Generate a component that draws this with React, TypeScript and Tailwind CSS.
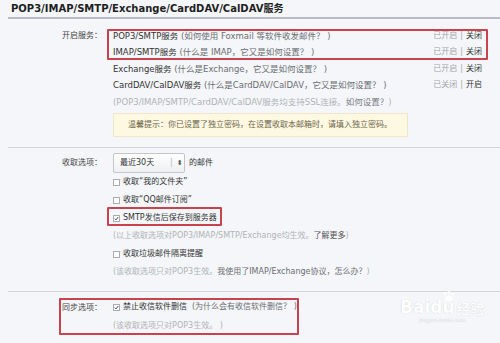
import React from "react";

const font = "font-['DejaVu_Sans','Noto_Sans_CJK_SC',sans-serif]";

function RedBox({ className }: { className: string }) {
  return (
    <div
      className={`pointer-events-none absolute rounded-[1px] border-2 border-[#c8434b] ${className}`}
    />
  );
}

function Checkbox({ checked }: { checked?: boolean }) {
  return (
    <span className="mr-[3px] inline-flex h-[7px] w-[7px] shrink-0 items-center justify-center border border-[#a9adb2] bg-white">
      {checked && (
        <svg viewBox="0 0 8 8" className="h-[7px] w-[7px]">
          <path d="M1.2 4.2 L3.2 6.2 L6.8 1.6" fill="none" stroke="#333" strokeWidth="1.4" />
        </svg>
      )}
    </span>
  );
}

type Service = {
  name: string;
  desc: string;
  on: boolean;
};

const services: Service[] = [
  { name: "POP3/SMTP服务", desc: "(如何使用 Foxmail 等软件收发邮件？ )", on: true },
  { name: "IMAP/SMTP服务", desc: "(什么是 IMAP，它又是如何设置？ )", on: true },
  { name: "Exchange服务", desc: "(什么是Exchange，它又是如何设置？ )", on: true },
  { name: "CardDAV/CalDAV服务", desc: "(什么是CardDAV/CalDAV，它又是如何设置？ )", on: false },
];

export default function App() {
  return (
    <div className={`relative h-[343px] w-[500px] overflow-hidden bg-[#f4f6f9] text-[8px] text-[#333] ${font}`}>
      {/* title */}
      <div className="ml-[8px] h-[19px] border-b-2 border-[#b9bdc3] pl-[3px] text-[10px] font-bold leading-[17px] text-[#1f1f1f]">
        POP3/IMAP/SMTP/Exchange/CardDAV/CalDAV服务
      </div>

      {/* services */}
      <div className="relative mt-[8.5px] flex">
        <div className="w-[102px] shrink-0 text-right leading-[16.5px] text-[#444]">开启服务：</div>
        <div className="ml-[11px] w-[369px]">
          {services.map((s) => (
            <div key={s.name} className="flex h-[16.5px] items-center justify-between text-[8.5px] leading-[16.5px]">
              <span>
                <span className="text-[#333]">{s.name}</span>{" "}
                <span className="text-[#6b6e72]">{s.desc}</span>
              </span>
              <span className="text-[8px]">
                <span className="text-[#a3a6aa]">{s.on ? "已开启" : "已关闭"}</span>
                <span className="mx-[3px] text-[#a3a6aa]">|</span>
                <span className="text-[#333]">{s.on ? "关闭" : "开启"}</span>
              </span>
            </div>
          ))}
          <div className="h-[16.5px] text-[8.5px] leading-[16.5px] text-[#b0b3b7]">
            (POP3/IMAP/SMTP/CardDAV/CalDAV服务均支持SSL连接。
            <span className="text-[#7a7d81]">如何设置？</span>)
          </div>
          <div className="mt-[3px] flex h-[24px] w-[295px] items-center border border-[#efe6c4] bg-[#fdf8e2] pl-[14px] text-[#6f6549]">
            温馨提示：你已设置了独立密码，在设置收取本邮箱时，请填入独立密码。
          </div>
        </div>
        <RedBox className="left-[107px] top-[1.5px] h-[31px] w-[381px]" />
      </div>

      <div className="ml-[8px] mt-[10px] h-px bg-[#d3d6da]" />

      {/* receive options */}
      <div className="relative mt-[5px] flex">
        <div className="w-[102px] shrink-0 text-right leading-[20px] text-[#444]">收取选项：</div>
        <div className="ml-[11px] flex-1">
          <div className="flex h-[20px] items-center">
            <div className="flex h-[20px] w-[72px] items-center rounded-[2px] border border-[#c2c5c9] bg-gradient-to-b from-white to-[#eef0f2] pl-[6px] text-[#333]">
              <span className="w-[50px]">最近30天</span>
              <span className="text-[#b5b8bc]">|</span>
              <span className="ml-[4px] text-[7px] leading-none text-[#555]">⬍</span>
            </div>
            <span className="ml-[4px]">的邮件</span>
          </div>
          <div className="flex h-[18px] items-center">
            <Checkbox />
            <span>收取“我的文件夹”</span>
          </div>
          <div className="flex h-[18px] items-center">
            <Checkbox />
            <span>收取“QQ邮件订阅”</span>
          </div>
          <div className="flex h-[18px] items-center">
            <Checkbox checked />
            <span>SMTP发信后保存到服务器</span>
          </div>
          <div className="flex h-[18px] items-center text-[#b0b3b7]">
            (以上收取选项对POP3/IMAP/SMTP/Exchange均生效。
            <span className="text-[#555]">了解更多</span>)
          </div>
          <div className="flex h-[18px] items-center">
            <Checkbox />
            <span>收取垃圾邮件隔离提醒</span>
          </div>
          <div className="flex h-[18px] items-center text-[#b0b3b7]">
            (该收取选项只对POP3生效。
            <span className="text-[#6b6e72]">我使用了IMAP/Exchange协议，怎么办？</span>)
          </div>
        </div>
        <RedBox className="left-[107px] top-[54px] h-[19px] w-[115px]" />
      </div>

      <div className="ml-[8px] mt-[10px] h-px bg-[#d3d6da]" />

      {/* sync options */}
      <div className="relative mt-[5.5px] flex">
        <div className="w-[102px] shrink-0 text-right leading-[19px] text-[#444]">同步选项：</div>
        <div className="ml-[11px] flex-1">
          <div className="flex h-[19px] items-center">
            <Checkbox checked />
            <span>禁止收信软件删信</span>
            <span className="ml-[5px] text-[#6b6e72]">(为什么会有收信软件删信？ )</span>
          </div>
          <div className="flex h-[19px] items-center text-[#b0b3b7]">(该收取选项只对POP3生效。 )</div>
        </div>
        <RedBox className="left-[59px] top-[0.5px] h-[37px] w-[240px]" />
      </div>

      {/* watermark */}
      <div className="pointer-events-none absolute left-[400px] top-[290px] flex flex-col items-center text-white">
        <svg viewBox="0 0 20 14" className="mb-[-3px] ml-[14px] h-[12px] w-[16px] opacity-90">
          <circle cx="5" cy="4" r="2" fill="white" />
          <circle cx="10" cy="2.5" r="2" fill="white" />
          <circle cx="15" cy="4" r="2" fill="white" />
          <ellipse cx="10" cy="10" rx="4.5" ry="3.5" fill="white" />
        </svg>
        <div className="flex items-end opacity-90">
          <span className="text-[17px] font-bold leading-none [text-shadow:0_0_1px_rgba(0,0,0,0.2)]">Baidu</span>
          <span className="ml-[2px] text-[14px] font-bold leading-none [text-shadow:0_0_1px_rgba(0,0,0,0.2)]">经验</span>
        </div>
        <span className="mt-[2px] text-[5px] leading-none opacity-90 [text-shadow:0_0_1px_rgba(0,0,0,0.3)]">jingyan.baidu.com</span>
      </div>
    </div>
  );
}
